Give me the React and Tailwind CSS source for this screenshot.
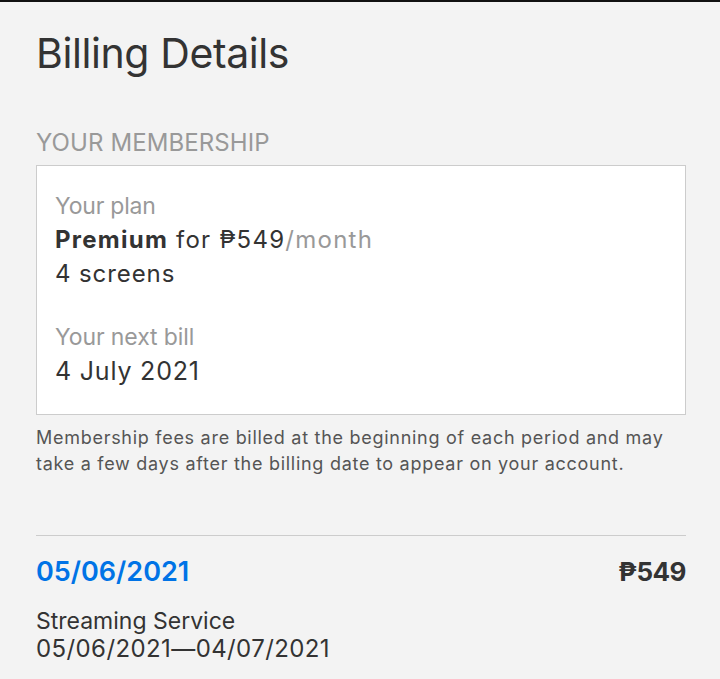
export default function App() {
  return (
    <div className="min-h-[679px] w-[720px] bg-[#f3f3f3] border-t-2 border-[#111] overflow-hidden" style={{ fontFamily: "Inter, 'Noto Sans', sans-serif" }}>
      <div className="pl-[36px] pr-[34px]">
        <h1 className="pt-[25px] text-[41px] leading-[52px] text-[#333] font-normal tracking-[-0.4px]">Billing Details</h1>
        <div className="mt-[49px] text-[24px] leading-[30px] text-[#999] tracking-[0.1px]">YOUR MEMBERSHIP</div>
        <div className="mt-[7px] bg-white border border-[#ccc] px-[18px] pt-[23px] pb-[26px]">
          <div className="text-[23px] leading-[34px] text-[#999] tracking-[-0.2px]">Your plan</div>
          <div className="text-[24px] leading-[34px] text-[#333] tracking-[1.25px]"><span className="font-bold">Premium</span> for ₱549<span className="text-[#999]">/month</span></div>
          <div className="text-[24px] leading-[34px] text-[#333] tracking-[0.9px]">4 screens</div>
          <div className="mt-[29px] text-[23px] leading-[34px] text-[#999] tracking-[-0.1px]">Your next bill</div>
          <div className="text-[25px] leading-[34px] text-[#333] tracking-[0.8px]">4 July 2021</div>
        </div>
        <p className="mt-[10px] text-[18px] leading-[26px] text-[#555] tracking-[0.72px]">Membership fees are billed at the beginning of each period and may take a few days after the billing date to appear on your account.</p>
        <div className="mt-[58px] border-t border-[#ccc] pt-[18px]">
          <div className="flex justify-between items-center">
            <span className="text-[27px] leading-[36px] font-semibold text-[#0073e6]">05/06/2021</span>
            <span className="text-[26px] leading-[36px] font-bold text-[#333] tracking-[-0.5px]">₱549</span>
          </div>
          <div className="mt-[17px] text-[23px] leading-[28px] text-[#333] tracking-[0px]">Streaming Service</div>
          <div className="text-[24px] leading-[28px] text-[#333] tracking-[0.4px]">05/06/2021—04/07/2021</div>
        </div>
      </div>
    </div>
  );
}
